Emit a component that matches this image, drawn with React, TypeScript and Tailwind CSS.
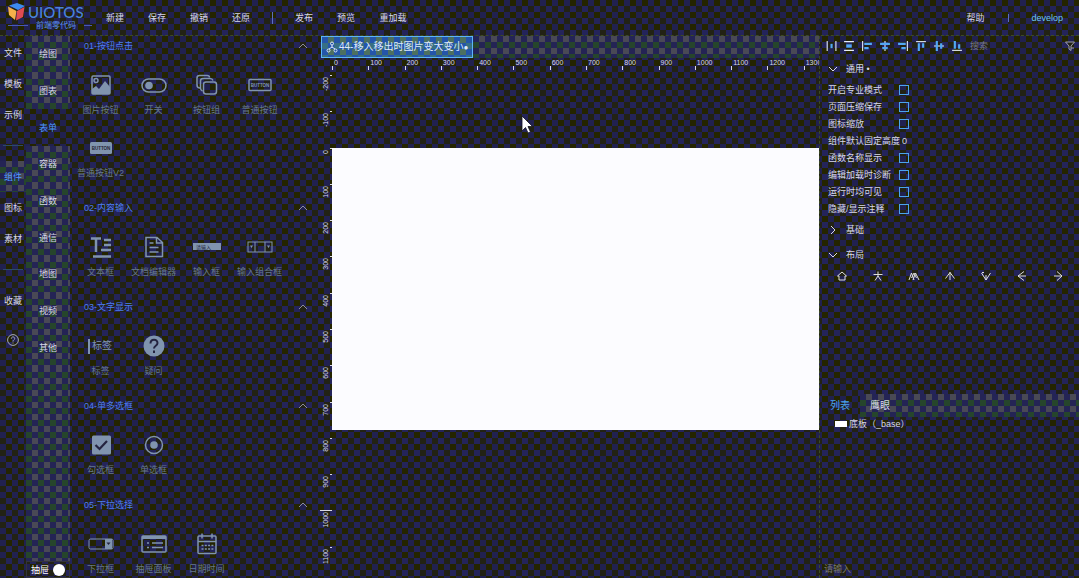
import type { ReactNode } from "react";

const RAIL = ["文件", "模板", "示例", "", "组件", "图标", "素材", "", "收藏"];
const GROUPS = ["绘图", "图表", "表单", "容器", "函数", "通信", "地图", "视频", "其他"];
const SHADED =
  "bg-[conic-gradient(#494955_25%,#242455_0_50%,#26452c_0_75%,#242455_0)] bg-[length:12px_12px]";

const I = ({ children, w = 28, h = 24 }: { children: ReactNode; w?: number; h?: number }) => (
  <svg width={w} height={h} viewBox={`0 0 ${w} ${h}`} fill="none" stroke="#8094ae" strokeWidth="1.5">
    {children}
  </svg>
);

const SECTIONS: { title: string; items: [string, ReactNode][] }[] = [
  {
    title: "01-按钮点击",
    items: [
      ["图片按钮", <I><rect x="5" y="3" width="18" height="18" rx="1" /><circle cx="9" cy="7.500" r="2" /><path d="M5 16l4-3 3 3 6-8 5 6v7H5z" fill="#8094ae" stroke="none" /></I>],
      ["开关", <I><rect x="2" y="6" width="24" height="13" rx="6.500" /><circle cx="9" cy="12.500" r="3.800" fill="#8094ae" stroke="none" /></I>],
      ["按钮组", <I><path d="M7 15c-2 0-3-1-3-3V5c0-1.500 1-2.500 2.500-2.500H14c1.500 0 2.500.5 2.500 2" /><path d="M9.500 18C8 17.500 7.500 16.500 7.500 15V8c0-1.500 1-2.500 2.500-2.500h7c1.500 0 2.500.5 3 2" /><rect x="10.500" y="9" width="13" height="12" rx="2.500" /></I>],
      ["普通按钮", <I><rect x="3" y="6.500" width="22" height="11" rx="1" /><text x="14" y="14" textAnchor="middle" fontSize="4.500" fontWeight="bold" fill="#8094ae" stroke="none">BUTTON</text></I>],
      ["普通按钮V2", <I><rect x="3" y="6" width="22" height="12" rx="1.500" fill="#8094ae" stroke="none" /><text x="14" y="14" textAnchor="middle" fontSize="4.500" fontWeight="bold" fill="#242430" stroke="none">BUTTON</text></I>],
    ],
  },
  {
    title: "02-内容输入",
    items: [
      ["文本框", <I><path d="M4 3.500h10M9 3.500V17M17 5h7M17 10h7M14 15h10M6 21.500h18" strokeWidth="2.500" /></I>],
      ["文档编辑器", <I><path d="M6 2.500h11l5.500 5V21.500H6zM16.500 2.500V8h6M9.500 8h4M9.500 12.500h9M9.500 17h9" /></I>],
      ["输入框", <I><rect y="8" width="28" height="7" fill="#8094ae" stroke="none" /><text x="3" y="13.500" fontSize="5" fill="#242440" stroke="none">请输入</text></I>],
      ["输入组合框", <I><rect x="2" y="7" width="24" height="10" strokeWidth="1" /><path d="M9 7v10M19 7v10" strokeWidth="1" /><path d="M4 10.500h3L5.500 13zM21 10.500h3L22.500 13z" fill="#8094ae" stroke="none" /></I>],
    ],
  },
  {
    title: "03-文字显示",
    items: [
      ["标签", <I><path d="M2 5v15" strokeWidth="2" /><text x="5" y="15" fontSize="10" fill="#8094ae" stroke="none">标签</text></I>],
      ["疑问", <I><circle cx="14" cy="12" r="10.500" fill="#8094ae" stroke="none" /><path d="M10.500 9.500c0-5 7-5 7-.5 0 3-3.500 2.500-3.500 5.500M14 16.500v2.500" stroke="#242440" strokeWidth="2" /></I>],
    ],
  },
  {
    title: "04-单多选框",
    items: [
      ["勾选框", <I><rect x="5" y="2.500" width="19" height="19" rx="1.500" fill="#8094ae" stroke="none" /><path d="M8.500 12l4 4 7.500-8" stroke="#242440" strokeWidth="2.200" /></I>],
      ["单选框", <I><circle cx="14" cy="12" r="8.500" /><circle cx="14" cy="12" r="3.800" fill="#8094ae" stroke="none" /></I>],
    ],
  },
  {
    title: "05-下拉选择",
    items: [
      ["下拉框", <I><rect x="2" y="7" width="24" height="10" rx="1.500" strokeWidth="1" /><path d="M18 7h7v10h-7z" fill="#8094ae" stroke="none" /><path d="M19.500 10.500h4L21.500 13z" fill="#242440" stroke="none" /></I>],
      ["抽屉面板", <I><rect x="2" y="4" width="24" height="16" rx="1" /><path d="M2 5.500h24" strokeWidth="3" /><path d="M7 11h2M7 15.500h2M12 11h11M12 15.500h11" /></I>],
      ["日期时间", <I><rect x="5" y="4" width="18" height="17.500" rx="1" /><path d="M5 9.500h18M9 1.500v5M19 1.500v5" /><path d="M8.500 13.500h12M8.500 17h12" strokeDasharray="2 1.300" /></I>],
    ],
  },
];

const OPTIONS = ["开启专业模式", "页面压缩保存", "图标缩放", "组件默认固定高度", "函数名称显示", "编辑加载时诊断", "运行时均可见", "隐藏/显示注释"];

const ALIGN: [string, string, string][] = [
  ["水平分布", "M2 1v9M10 1v9", "M5 3.500h2v4H5z"],
  ["垂直分布", "M1 1.500h9M1 9.500h9", "M3 4h5v3H3z"],
  ["左对齐", "M1.500 1v9", "M3 2.500h7v2H3zM3 6.500h4v2H3z"],
  ["水平居中", "M5.500 1v9", "M1 2.500h9v2H1zM3 6.500h5v2H3z"],
  ["右对齐", "M9.500 1v9", "M1 2.500h7v2H1zM4 6.500h4v2H4z"],
  ["顶部对齐", "M1 1.500h9", "M2.500 3h2v7h-2zM6.500 3h2v4h-2z"],
  ["垂直居中", "M1 5.500h9", "M2.500 1h2v9h-2zM6.500 3h2v5h-2z"],
  ["底部对齐", "M1 9.500h9", "M2.500 1h2v7h-2zM6.500 4h2v4h-2z"],
];

const LAYOUTS: [string, string][] = [
  ["整体", "M6 2l4.500 4H9v4H3V6H1.500z"],
  ["居中", "M1.500 4.500h9M6 1.500v5M6 6L3 10.500M6 6l3 4.500"],
  ["并列", "M1 10l2.500-7L6 10M5 10l2.500-7L11 10M3.500 8L6 3l2.500 5"],
  ["向上", "M6 2v8M6 2.500L1.500 8.500M6 2.500l4.500 6"],
  ["向下", "M6 10V5M6 10L1.500 3M6 10l4.500-7M2 2.500h2"],
  ["向左", "M2 6h8M2 6l6-4.500M2 6l6 4.500"],
  ["向右", "M2 6h8M10 6L5 1.500M10 6l-5 4.500"],
];

function Chevron({ d, className }: { d: string; className: string }) {
  return (
    <svg width="10" height="10" viewBox="0 0 10 10" fill="none" stroke="currentColor" className={className}>
      <path d={d} />
    </svg>
  );
}

function Header() {
  return (
    <header className="flex h-9 shrink-0 items-center border-b border-dashed border-[#3c4a24]">
      <div className="w-[94px] shrink-0 pl-2">
        <div className="flex h-4 items-center gap-[3px]">
          <svg width="17" height="18" viewBox="0 0 17 18">
            <path d="M1 2.500L9 0l8 3-7 4z" fill="#3d8bf0" />
            <path d="M0 3.500L8.500 8 7 17 1 12z" fill="#f5b04a" />
            <path d="M9 8l7.500-4L15 14l-7 3.500z" fill="#e14b52" />
          </svg>
          <span className="font-[Lato] text-[15px] leading-4 font-medium text-[#4a82dc]">UIOTOS</span>
        </div>
        <div className="flex h-3 items-center gap-2 text-[8px] text-[#5b8ff0]">
          <i className="h-px w-5 bg-[#4858b8]" />
          前端零代码
          <i className="h-px w-2 bg-[#4858b8]" />
        </div>
      </div>
      <nav className="flex flex-1 items-center">
        {["新建", "保存", "撤销", "还原"].map((t) => (
          <button key={t} className="w-[42px]">{t}</button>
        ))}
        <i className="mx-[10px] h-3 w-px bg-[#5b6fc0]" />
        <button className="w-[42px]">发布</button>
        <button className="w-[42px]">预览</button>
        <button className="w-[52px]">重加载</button>
      </nav>
      <button className="w-[42px]">帮助</button>
      <i className="mx-3 h-2 w-px bg-[#5b6fc0]" />
      <a href="#user" className="pr-4 pl-[10px] text-[#6cc4f4]">develop</a>
    </header>
  );
}

function Palette() {
  return (
    <div className="w-[250px] shrink-0 overflow-hidden">
      {SECTIONS.map((s) => (
        <section key={s.title} className="pb-1">
          <button className="flex h-5 w-full items-center justify-between pr-3 pl-[14px] text-[#4d7df2]">
            {s.title}
            <Chevron d="M1 7l4-4 4 4" className="text-[#8c8c9c]" />
          </button>
          <div className="mt-3 grid grid-cols-[repeat(4,53px)] pl-1">
            {s.items.map(([name, icon]) => (
              <button key={name} className="flex h-[63px] flex-col items-center whitespace-nowrap text-[#66788a]">
                <span className="flex h-[34px] items-center">{icon}</span>
                <span className="leading-4">{name}</span>
              </button>
            ))}
          </div>
        </section>
      ))}
    </div>
  );
}

function Canvas() {
  const ticks = Array.from({ length: 14 }, (_, i) => i);
  return (
    <main className="relative flex min-w-0 flex-1 flex-col overflow-hidden">
      <div className="flex h-[22px] shrink-0 pl-px">
        <button className="flex w-[152px] shrink-0 items-center gap-px border border-[#5cb4f8] bg-[conic-gradient(#4c7060_25%,#2455aa_0_50%,#376f83_0_75%,#2455aa_0)] bg-[length:12px_12px] pl-1 text-[10px] whitespace-nowrap text-[#dce8fa]">
          <svg width="12" height="12" viewBox="0 0 12 12" fill="none" stroke="currentColor" className="shrink-0">
            <circle cx="6" cy="2.500" r="1.500" /><circle cx="2.500" cy="9.500" r="1.500" /><circle cx="9.500" cy="9.500" r="1.500" />
            <path d="M6 4v2.500M3 8l3-2 3 2" />
          </svg>
          <span>44-移入移出时图片变大变小<span className="text-[8px]">●</span></span>
        </button>
        <div className={"flex-1 " + SHADED} />
      </div>
      <div className="ml-3 h-3 shrink-0 overflow-hidden font-[Liberation_Sans] text-[7px] leading-[10px]">
        <div className="grid h-3 w-[508px] grid-cols-14">
          {ticks.map((i) => (
            <div key={i} className="flex">
              <i className="mt-auto h-1 w-px bg-[#d8d8e8]" />
              <span className="pl-px">{i * 100}</span>
            </div>
          ))}
        </div>
      </div>
      <div className="flex min-h-0 flex-1">
        <div className="w-3 shrink-0 overflow-hidden pt-[5px] font-[Liberation_Sans] text-[7px] leading-[10px]">
          <div className="grid h-[508px] grid-rows-14">
            {ticks.map((i) => (
              <div key={i} className="flex flex-col">
                <i className={i === 12 ? "h-px w-full bg-[#d8d8e8]" : "ml-auto h-px w-[2px] bg-[#d8d8e8]"} />
                <span className="rotate-180 self-center pb-px [writing-mode:vertical-rl]">{(i - 2) * 100}</span>
              </div>
            ))}
          </div>
        </div>
        <div className="flex-1 pt-[78px]">
          <div className="h-[282px] bg-[#fcfcff]" />
        </div>
      </div>
      <svg width="12" height="19" viewBox="0 0 12 19" className="absolute top-[79px] left-[201px]">
        <path d="M1 1v15l3.500-3.500L7 18l2.500-1L7 11.500h4.500z" fill="#fff" stroke="#111122" strokeWidth=".8" />
      </svg>
    </main>
  );
}

function Inspector() {
  return (
    <aside className="flex w-[260px] shrink-0 flex-col border-l border-dashed border-[#3c4a24]">
      <div className="flex h-5 items-center pl-[2px]">
        {ALIGN.map(([name, line, fill]) => (
          <button key={name} aria-label={name} className="flex w-[18px] shrink-0 justify-center">
            <svg width="12" height="12" viewBox="0 0 11 11">
              <path d={line} stroke="#e4ecf8" /><path d={fill} fill="#52a8f4" />
            </svg>
          </button>
        ))}
        <input aria-label="搜索" placeholder="搜索" className="min-w-0 flex-1 bg-transparent pl-1 outline-none placeholder:text-[#777788]" />
        <button aria-label="筛选" className="pr-1">
          <svg width="10" height="10" viewBox="0 0 10 10" fill="none" stroke="#a0a0a8"><path d="M.5 1h9L6 5v4.500L4 8V5zM6 7h3" /></svg>
        </button>
      </div>
      <button className="mt-1 flex h-[18px] items-center gap-2 pl-2"><Chevron d="M1 3l4 4 4-4" className="" />通用 •</button>
      <div className="mt-[3px] pl-2">
        {OPTIONS.map((t, i) => (
          <label key={t} className="flex h-[17px] items-center">
            <span className="w-[71px] whitespace-nowrap">{t}</span>
            {i === 3 ? (
              <input defaultValue="0" className="ml-[3px] w-8 bg-transparent outline-none" />
            ) : (
              <input type="checkbox" className="size-[10px] appearance-none border border-[#4ba3ee] checked:bg-[#4ba3ee]" />
            )}
          </label>
        ))}
      </div>
      <button className="flex h-[25px] items-center gap-2 pl-2"><Chevron d="M3 1l4 4-4 4" className="" />基础</button>
      <button className="flex h-[25px] items-center gap-2 pl-2"><Chevron d="M1 3l4 4 4-4" className="" />布局</button>
      <div className="flex h-[18px] items-center pl-1">
        {LAYOUTS.map(([name, d]) => (
          <button key={name} aria-label={name} className="flex w-9 justify-center">
            <svg width="12" height="12" viewBox="0 0 12 12" fill="none" stroke="#dedede"><path d={d} /></svg>
          </button>
        ))}
      </div>
      <div className="mt-[109px] flex h-[23px] shrink-0 text-[10px]">
        <button className="w-10 text-[#4aa4f0]">列表</button>
        <div className={"flex flex-1 " + SHADED}><button className="w-10">鹰眼</button></div>
      </div>
      <button className="flex items-center gap-[2px] pl-[15px]"><i className="h-[6px] w-3 bg-white" />底板（_base）</button>
      <input aria-label="请输入" placeholder="请输入" className="mt-auto mb-px h-4 bg-transparent pl-1 outline-none placeholder:text-[#777770]" />
    </aside>
  );
}

export default function App() {
  return (
    <div className="flex h-screen flex-col overflow-hidden bg-[conic-gradient(#242400_25%,#24245a_0_50%,#222214_0_75%,#212150_0)] bg-[length:12px_12px] font-['Liberation_Sans','Noto_Sans_CJK_SC',sans-serif] text-[9px] leading-[14px] text-[#d8d8e8]">
      <Header />
      <div className="flex min-h-0 flex-1">
        <nav className="flex w-[26px] shrink-0 flex-col pt-px">
          {RAIL.map((t, i) =>
            t ? (
              <button key={i} className={"h-[31px] " + (i === 4 ? SHADED + " text-[#4c98ff]" : "")}>{t}</button>
            ) : (
              <div key={i} className="flex h-[31px] items-center px-[3px]"><i className="h-px w-full bg-[#2c4a68]" /></div>
            ),
          )}
          <button aria-label="帮助" className="flex h-12 items-center justify-center">
            <svg width="12" height="12" viewBox="0 0 12 12" fill="none" stroke="#a8acb8">
              <circle cx="6" cy="6" r="5.400" /><path d="M4.300 4.700c0-2.300 3.400-2.300 3.400-.2C7.700 6 6 5.800 6 7.500M6 8.500v1" />
            </svg>
          </button>
        </nav>
        <div className="flex w-11 shrink-0 flex-col">
          <div className="flex h-[330px] flex-col">
            {GROUPS.map((t, i) => (
              <button key={t} className={"flex-1 " + (i === 2 ? "text-[#4c98ff]" : SHADED)}>{t}</button>
            ))}
          </div>
          <div className={"flex-1 " + SHADED} />
          <label className="flex h-[17px] items-center justify-between border border-[#33333c] px-1 text-white">
            抽屉
            <input type="checkbox" className="size-3 appearance-none rounded-full bg-white" />
          </label>
        </div>
        <Palette />
        <Canvas />
        <Inspector />
      </div>
    </div>
  );
}
